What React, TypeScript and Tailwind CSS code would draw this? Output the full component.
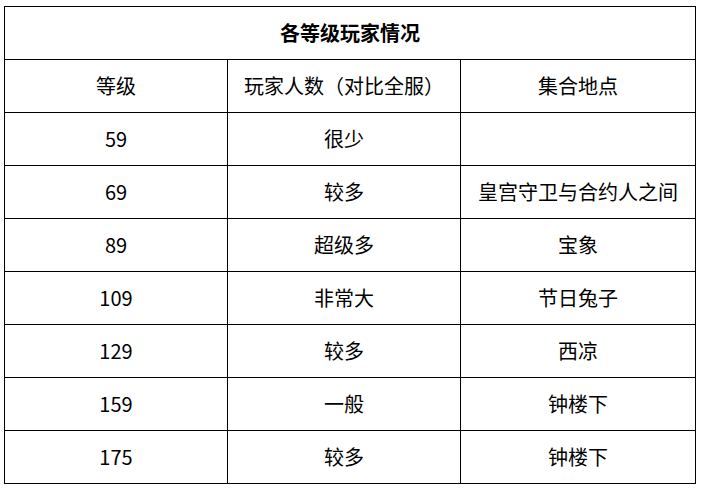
const ROWS: [string, string, string][] = [
  ["59", "很少", ""],
  ["69", "较多", "皇宫守卫与合约人之间"],
  ["89", "超级多", "宝象"],
  ["109", "非常大", "节日兔子"],
  ["129", "较多", "西凉"],
  ["159", "一般", "钟楼下"],
  ["175", "较多", "钟楼下"],
];

export default function App() {
  return (
    <div className="h-[488px] w-[702px] bg-white pl-[4px] pt-[6px] font-['Microsoft_YaHei','Noto_Sans_CJK_SC',sans-serif] text-[20px] text-black">
      <table className="w-[691px] table-fixed border-collapse">
        <colgroup>
          <col className="w-[223px]" />
          <col className="w-[233px]" />
          <col className="w-[235px]" />
        </colgroup>
        <tbody>
          <tr className="h-[53px]">
            <td colSpan={3} className="border border-black text-center font-bold">
              各等级玩家情况
            </td>
          </tr>
          <tr className="h-[53px]">
            <td className="border border-black text-center">等级</td>
            <td className="border border-black text-center">玩家人数（对比全服）</td>
            <td className="border border-black text-center">集合地点</td>
          </tr>
          {ROWS.map(([lv, num, place], i) => (
            <tr key={i} className="h-[53px]">
              <td className="border border-black text-center">{lv}</td>
              <td className="border border-black text-center">{num}</td>
              <td className="border border-black text-center">{place}</td>
            </tr>
          ))}
        </tbody>
      </table>
    </div>
  );
}
